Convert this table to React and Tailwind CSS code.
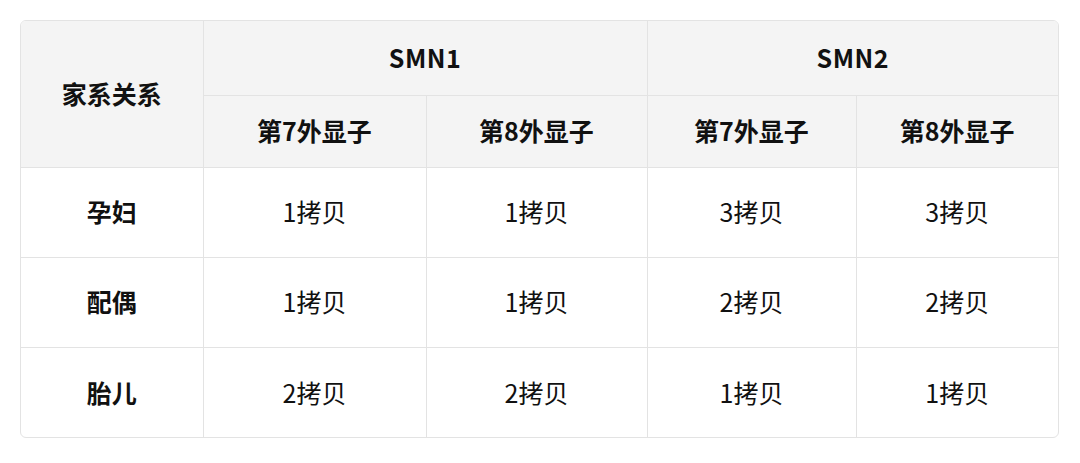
export default function App() {
  const rows = [
    { name: '孕妇', vals: ['1拷贝', '1拷贝', '3拷贝', '3拷贝'] },
    { name: '配偶', vals: ['1拷贝', '1拷贝', '2拷贝', '2拷贝'] },
    { name: '胎儿', vals: ['2拷贝', '2拷贝', '1拷贝', '1拷贝'] },
  ];
  const font = { fontFamily: '"Noto Sans CJK SC", "Noto Sans", sans-serif' };

  return (
    <div className="bg-white w-[1080px] h-[463px] pt-[20px] pl-[20px]" style={font}>
      <div className="w-[1039px] border border-[#e3e3e3] rounded-[6px] overflow-hidden">
        <table className="w-full border-collapse table-fixed text-[#111] text-[25px]">
          <colgroup>
            <col className="w-[182px]" />
            <col className="w-[223px]" />
            <col className="w-[221px]" />
            <col className="w-[209px]" />
            <col />
          </colgroup>
          <thead className="bg-[#f4f4f4] font-bold">
            <tr className="h-[74px]">
              <th rowSpan={2} className="border-r border-b border-[#e3e3e3] font-bold">家系关系</th>
              <th colSpan={2} className="border-r border-b border-[#e3e3e3] font-bold tracking-[0.5px]">SMN1</th>
              <th colSpan={2} className="border-b border-[#e3e3e3] font-bold tracking-[0.5px]">SMN2</th>
            </tr>
            <tr className="h-[72px]">
              <th className="border-r border-b border-[#e3e3e3] font-bold">第7外显子</th>
              <th className="border-r border-b border-[#e3e3e3] font-bold">第8外显子</th>
              <th className="border-r border-b border-[#e3e3e3] font-bold">第7外显子</th>
              <th className="border-b border-[#e3e3e3] font-bold">第8外显子</th>
            </tr>
          </thead>
          <tbody>
            {rows.map((r, i) => (
              <tr key={r.name} className="h-[90px]">
                <td className={`text-center font-bold border-r border-[#e3e3e3] ${i < 2 ? 'border-b' : ''}`}>{r.name}</td>
                {r.vals.map((v, j) => (
                  <td
                    key={j}
                    className={`text-center border-[#e3e3e3] ${j < 3 ? 'border-r' : ''} ${i < 2 ? 'border-b' : ''}`}
                  >
                    {v}
                  </td>
                ))}
              </tr>
            ))}
          </tbody>
        </table>
      </div>
    </div>
  );
}
